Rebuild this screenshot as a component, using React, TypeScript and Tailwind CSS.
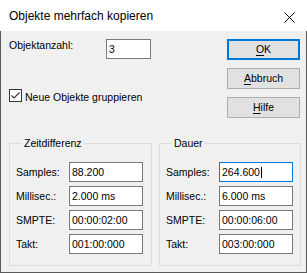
import React from 'react'

type FieldRow = {
  label: string
  value: string
  focused?: boolean
}

const zeitdifferenz: FieldRow[] = [
  { label: 'Samples:', value: '88.200' },
  { label: 'Millisec.:', value: '2.000 ms' },
  { label: 'SMPTE:', value: '00:00:02:00' },
  { label: 'Takt:', value: '001:00:000' }
]

const dauer: FieldRow[] = [
  { label: 'Samples:', value: '264.600', focused: true },
  { label: 'Millisec.:', value: '6.000 ms' },
  { label: 'SMPTE:', value: '00:00:06:00' },
  { label: 'Takt:', value: '003:00:000' }
]

function TextBox({ value, focused, width }: { value: string; focused?: boolean; width: string }) {
  return (
    <div
      className={`flex h-[20px] items-center border bg-white pl-[2px] leading-[13px] text-black ${width} ${
        focused ? 'border-[#0078d7]' : 'border-[#7a7a7a]'
      }`}
    >
      <span>{value}</span>
      {/* caret of the focused box */}
      {focused && <span className="ml-[1px] h-[11px] w-px bg-black" />}
    </div>
  )
}

function DlgButton({ children, isDefault }: { children: React.ReactNode; isDefault?: boolean }) {
  return (
    <button
      type="button"
      className={`flex h-[21px] w-[73px] items-center justify-center bg-[#e1e1e1] leading-[13px] text-black ${
        isDefault ? 'border-2 border-[#0078d7]' : 'border border-[#adadad]'
      }`}
    >
      {children}
    </button>
  )
}

function GroupBox({ title, rows, className }: { title: string; rows: FieldRow[]; className: string }) {
  return (
    <fieldset className={`border border-[#dcdcdc] px-[6px] pt-[12px] pb-[11px] ${className}`}>
      <legend className="ml-[6px] px-[2px] leading-[13px]">{title}</legend>
      <div className="flex flex-col gap-[4px]">
        {rows.map((r) => (
          <div key={r.label} className="flex items-center">
            <span className="w-[53px] leading-[13px]">{r.label}</span>
            <TextBox value={r.value} focused={r.focused} width="w-[74px]" />
          </div>
        ))}
      </div>
    </fieldset>
  )
}

export default function App() {
  return (
    <div
      className="flex h-[273px] w-[307px] flex-col overflow-hidden bg-white text-[10.5px] text-black"
      style={{ fontFamily: '"Liberation Sans", Arial, sans-serif' }}
    >
      {/* title bar */}
      <div className="flex h-[31px] shrink-0 items-center bg-white pt-[1px] pl-[9px]">
        <span className="text-[12px] leading-[14px]">Objekte mehrfach kopieren</span>
        <svg className="mt-[3px] mr-[12px] ml-auto" width="11" height="11" viewBox="0 0 11 11">
          <path d="M0.5 0.5 L10.5 10.5 M10.5 0.5 L0.5 10.5" stroke="#000" strokeWidth="1" fill="none" />
        </svg>
      </div>

      <div className="flex flex-1 flex-col border-x border-b border-[#5a5a5a] bg-[#f0f0f0] pt-[8px] pr-[5px] pl-[8px]">
        <div className="flex">
          <div className="flex flex-1 flex-col">
            <div className="flex items-start">
              <span className="w-[97px] leading-[13px]">Objektanzahl:</span>
              <TextBox value="3" width="w-[45px]" />
            </div>
            <div className="mt-[30px] flex items-start">
              <svg width="13" height="13" viewBox="0 0 13 13" className="shrink-0">
                <rect x="0.5" y="0.5" width="12" height="12" fill="#fff" stroke="#333" />
                <path d="M2.5 6.5 L5 9 L10.5 3.5" stroke="#333" strokeWidth="1.1" fill="none" />
              </svg>
              <span className="mt-[1px] ml-[3px] leading-[14px]">Neue Objekte gruppieren</span>
            </div>
          </div>
          <div className="mr-[1px] flex flex-col gap-[8px]">
            <DlgButton isDefault>
              <span className="underline underline-offset-[2px]">O</span>K
            </DlgButton>
            <DlgButton>
              <span className="underline underline-offset-[2px]">A</span>bbruch
            </DlgButton>
            <DlgButton>
              <span className="underline underline-offset-[2px]">H</span>ilfe
            </DlgButton>
          </div>
        </div>

        <div className="mt-[19px] flex gap-[7px]">
          <GroupBox title="Zeitdifferenz" rows={zeitdifferenz} className="w-[143px]" />
          <GroupBox title="Dauer" rows={dauer} className="w-[142px]" />
        </div>
      </div>
    </div>
  )
}
